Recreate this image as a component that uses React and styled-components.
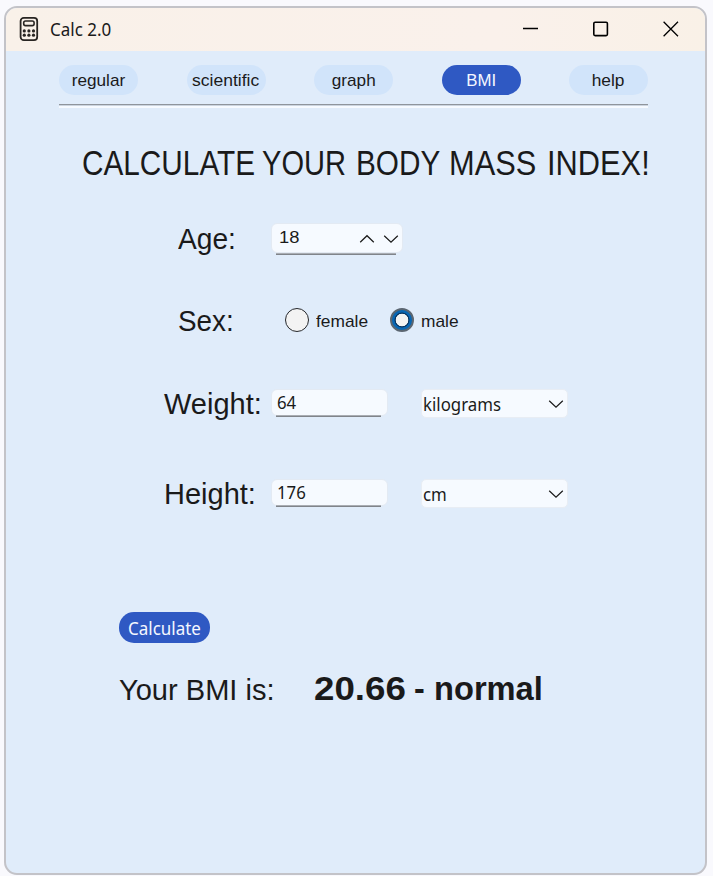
import React from "react";
import styled, { createGlobalStyle } from "styled-components";

const GlobalStyle = createGlobalStyle`
  * { box-sizing: border-box; }
  body { margin: 0; background: #f9f9fd; color: #1a1a1a; font-family: "Liberation Sans", Arial, sans-serif; }
  #root { height: 876px; overflow: hidden; }
`;

const Window = styled.div`
  width: 703px;
  height: 869px;
  margin: 6px 0 0 4px;
  border: 2px solid #c3c3c8;
  border-radius: 13px;
  background: #e0ecfa;
  overflow: hidden;
`;
const Shell = styled.div`
  display: flow-root;
`;
const TitleBar = styled.header`
  height: 43px;
  display: flex;
  align-items: center;
  padding: 0 26px 2px 13px;
  background: linear-gradient(90deg, #f9f1e9, #faf1eb 70%, #f9f1e7);
`;
const AppName = styled.div`
  flex: 1;
  padding: 1px 0 0 11px;
`;
const WindowButtons = styled.div`
  display: flex;
  align-items: center;
  gap: 54px;
`;
/* Text set at a given size and horizontally condensed or expanded. */
const Fit = styled.span`
  display: inline-block;
  white-space: nowrap;
  line-height: 1.2;
  font-family: ${(p) => (p.$ui ? '"Noto Sans", "Open Sans", sans-serif' : '"Liberation Sans", Arial, sans-serif')};
  font-size: ${(p) => p.$size}px;
  font-weight: ${(p) => (p.$bold ? 700 : 400)};
  transform: scaleX(${(p) => p.$stretch || 1});
  transform-origin: ${(p) => p.$origin || "left"} center;
`;
const Nav = styled.nav`
  width: 589px;
  height: 54px;
  margin: 0 0 0 53px;
  padding-top: 14px;
  display: flex;
  justify-content: space-between;
  align-items: flex-start;
  border-bottom: 1px solid #8f959c;
  box-shadow: 0 1px #cbd4df, 0 3px #f6faff;
`;
const Tab = styled.button`
  width: 79px;
  height: 30px;
  padding: 2px 0 0;
  border: 0;
  border-radius: 15px;
  display: flex;
  justify-content: center;
  align-items: center;
  background: ${(p) => (p.$active ? "#2f59c3" : "#d1e4fa")};
  color: ${(p) => (p.$active ? "#f4f7ff" : "#1a1a1a")};
`;
const Title = styled.h1`
  margin: 36px 0 0 76px;
  height: 43px;
  padding-top: 1px;
  display: grid;
  grid-template-columns: 180px 93.5px 93px 98.5px 1fr;
  align-items: center;
  font-weight: 400;
`;
const Form = styled.form`
  display: grid;
  grid-template-rows: 82px 83px 82px 98px;
  padding-top: 13px;
`;
const Line = styled.div`
  display: grid;
  grid-template-columns: ${(p) => 265 - p.$indent}px 1fr;
  align-items: center;
  margin-left: ${(p) => p.$indent}px;
`;
const Label = styled.div`
  padding-top: 2px;
`;
const Controls = styled.div`
  display: flex;
  align-items: center;
`;
const Field = styled.div`
  position: relative;
  width: ${(p) => p.$width}px;
  height: ${(p) => p.$height}px;
  margin-top: ${(p) => p.$shift || 0}px;
  padding: ${(p) => (p.$spin ? 2 : 0)}px ${(p) => (p.$spin ? 3 : 6)}px 0 ${(p) => (p.$spin ? 7 : 5)}px;
  border: 1px solid #e3eaf3;
  border-radius: 6px;
  background: #f6faff;
  display: flex;
  align-items: center;
  justify-content: space-between;
  &::after {
    content: "";
    position: absolute;
    left: 4px;
    right: 6px;
    bottom: ${(p) => (p.$spin ? -3 : -2)}px;
    height: 2px;
    background: linear-gradient(#a9adb3 50%, #80848a 50%);
  }
`;
const Spinners = styled.div`
  display: flex;
  gap: 8px;
`;
const Select = styled.div`
  width: 147px;
  height: 29px;
  margin: 1px 0 0 33px;
  padding: 2px 3px 0 1px;
  border: 1px solid #e8edf4;
  border-radius: 5px;
  background: #f6faff;
  display: flex;
  align-items: center;
  justify-content: space-between;
  svg { margin-bottom: 2px; }
`;
const Radio = styled.span`
  width: 24px;
  height: 24px;
  flex: none;
  border-radius: 50%;
  border: ${(p) => (p.$on ? "2px solid #5b6671" : "1.5px solid #25282c")};
  background: ${(p) => (p.$on ? "radial-gradient(circle, #f3f3f3 0 6px, #083663 6.6px 7.2px, #0866b3 7.8px)" : "#f3f3f3")};
`;
const RadioLabel = styled.label`
  display: flex;
  align-items: center;
  gap: 7px;
  width: 105px;
`;
const RadioGroup = styled(Controls)`
  padding: 0 0 0 14px;
`;
const RadioText = styled.span`
  padding-top: 4px;
`;
const Result = styled.section`
  margin: 70px 0 0 113px;
`;
const Calculate = styled.button`
  width: 91px;
  height: 31px;
  padding: 2px 0 0 9px;
  border: 0;
  border-radius: 15px;
  display: flex;
  align-items: center;
  background: #2f59c3;
  color: #f4f7ff;
`;
const ResultLine = styled.div`
  display: grid;
  grid-template-columns: 195px 100px 20px 1fr;
  align-items: baseline;
  margin-top: 25px;
`;

const CalculatorIcon = () => (
  <svg width="20" height="26" viewBox="0 0 20 26" fill="none" stroke="#282522" strokeWidth="1.8">
    <rect x="1.6" y="1.9" width="16.6" height="22.2" rx="3.2" />
    <rect x="4.7" y="5" width="10.4" height="4.6" rx="1.8" strokeWidth="1.6" />
    <g fill="#282522" stroke="none">
      {[5.3, 9.9, 14.5].map((x) => [14.9, 19.2].map((y) => <circle key={`${x}-${y}`} cx={x} cy={y} r="1.6" />))}
    </g>
  </svg>
);
const Chevron = ({ up }) => (
  <svg width="16" height="10" viewBox="0 0 16 10" fill="none" stroke="#1a1a1a" strokeWidth="1.2">
    <path d={up ? "M1.2 8.2 8 1.7l6.8 6.5" : "M1.2 1.7 8 8.2l6.8-6.5"} />
  </svg>
);
const Glyph = ({ d, box }) => (
  <svg width="16" height="16" viewBox="0 0 16 16" fill="none" stroke="#000" strokeWidth={box ? 1.6 : 1.3}>
    {box ? <rect x=".8" y="1.2" width="13.6" height="13.4" rx="1.3" /> : <path d={d} />}
  </svg>
);

const TABS = [
  ["regular", 1.01],
  ["scientific", 1.03],
  ["graph", 1.01],
  ["BMI", 0.99],
  ["help", 1.02],
];

const TITLE_WORDS = [
  ["CALCULATE", 0.85],
  ["YOUR", 0.83],
  ["BODY", 0.85],
  ["MASS", 0.88],
  ["INDEX!", 0.88],
];

const Measure = ({ label, value, unit }) => (
  <Line $indent={158}>
    <Label><Fit $size={29}>{label}</Fit></Label>
    <Controls>
      <Field $width={117} $height={27} $shift={-2}><Fit $ui $size={17.5} $stretch={0.96}>{value}</Fit></Field>
      <Select><Fit $ui $size={18} $stretch={0.935}>{unit}</Fit><Chevron /></Select>
    </Controls>
  </Line>
);

export default function App() {
  return (
    <Shell>
      <GlobalStyle />
      <Window>
        <TitleBar>
          <CalculatorIcon />
          <AppName><Fit $ui $size={17.5} $stretch={0.97}>Calc 2.0</Fit></AppName>
          <WindowButtons>
            <Glyph d="M0 7.5h15" />
            <Glyph box />
            <Glyph d="m.6.8 14.4 14.4M15 .8.6 15.2" />
          </WindowButtons>
        </TitleBar>
        <Nav>
          {TABS.map(([name, stretch]) => (
            <Tab key={name} $active={name === "BMI"}>
              <Fit $size={17} $stretch={stretch} $origin="center">{name}</Fit>
            </Tab>
          ))}
        </Nav>
        <Title>
          {TITLE_WORDS.map(([word, stretch]) => (
            <Fit key={word} $size={35} $stretch={stretch}>{word} </Fit>
          ))}
        </Title>
        <Form>
          <Line $indent={172}>
            <Label><Fit $size={29} $stretch={0.97}>Age:</Fit></Label>
            <Field $width={132} $height={30} $spin $shift={-1}>
              <Fit $size={17} $stretch={1.08}>18</Fit>
              <Spinners><Chevron up /><Chevron /></Spinners>
            </Field>
          </Line>
          <Line $indent={172}>
            <Label><Fit $size={29} $stretch={0.96}>Sex:</Fit></Label>
            <RadioGroup>
              <RadioLabel><Radio /><RadioText><Fit $size={17} $stretch={1.02}>female</Fit></RadioText></RadioLabel>
              <RadioLabel><Radio $on /><RadioText><Fit $size={17} $stretch={1.02}>male</Fit></RadioText></RadioLabel>
            </RadioGroup>
          </Line>
          <Measure label="Weight:" value="64" unit="kilograms" />
          <Measure label="Height:" value="176" unit="cm" />
        </Form>
        <Result>
          <Calculate type="button"><Fit $ui $size={17.5} $stretch={0.97}>Calculate</Fit></Calculate>
          <ResultLine>
            <Fit $size={29.5} $stretch={0.985}>Your BMI is:</Fit>
            <Fit $size={34} $bold $stretch={1.08}>20.66 </Fit>
            <Fit $size={34} $bold $stretch={0.95}>- </Fit>
            <Fit $size={34} $bold $stretch={0.96}>normal</Fit>
          </ResultLine>
        </Result>
      </Window>
    </Shell>
  );
}
